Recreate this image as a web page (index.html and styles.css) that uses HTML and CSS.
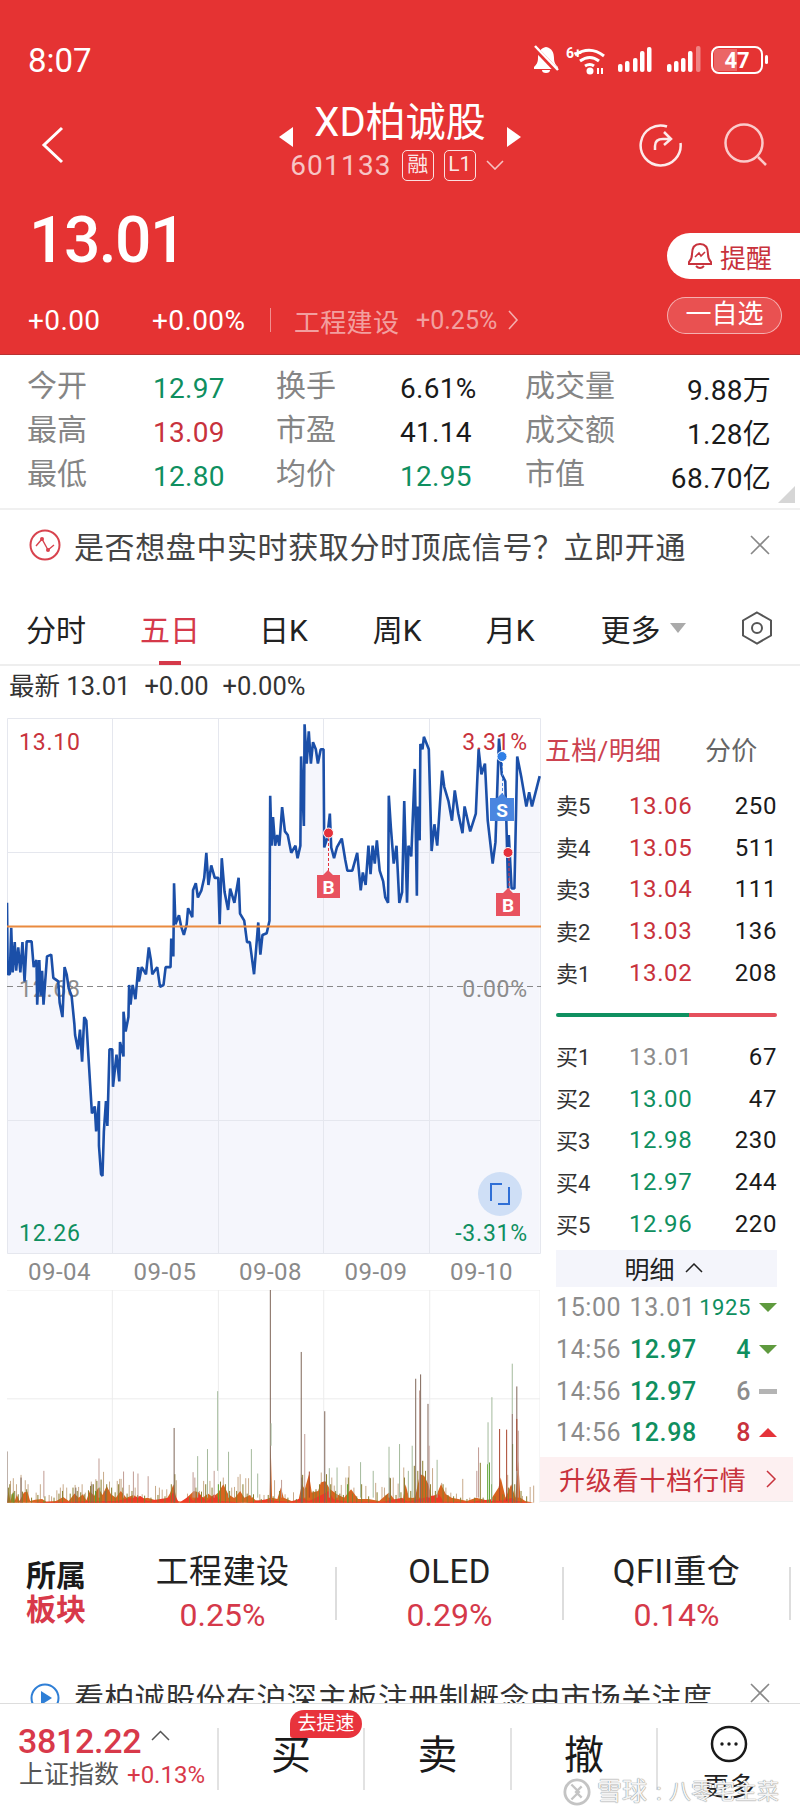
FILE: index.html

```html
<!DOCTYPE html>
<html lang="zh">
<head>
    <meta charset="UTF-8">
    <meta name="viewport" content="width=device-width, initial-scale=1.0">
    <title>XD柏诚股</title>
    <link rel="stylesheet" href="styles.css">
</head>
<body>
<div class="page">

    <header class="top">
        <div class="status">
            <span class="clock">8:07</span>
            <svg class="status-icons" width="240" height="34" viewBox="0 0 240 34">
                <path d="M16 3c6 1 8 6 8 11 0 5 2 7 4 9v2H4v-2c2-2 4-4 4-9 0-6 3-10 8-11z" fill="#fff"/>
                <path d="M12 26h8a4 3 0 0 1-8 0z" fill="#fff"/>
                <path d="M4 3l23 24" stroke="#e53333" stroke-width="5"/>
                <path d="M5 2l23 24" stroke="#fff" stroke-width="2.5"/>
                <text class="st-six" x="36" y="14">6+</text>
                <path d="M45 11q15-10 29 1M50 17q10-7 19 0M55 22q5-3 9 0" stroke="#fff" stroke-width="3" fill="none"/>
                <circle cx="60" cy="27" r="3.5" fill="#fff"/>
                <path d="M67 24h2v6h-2zM71 24h2v6h-2z" fill="#fff"/>
                <g fill="#fff">
                    <rect x="88" y="20" width="4.5" height="8" rx="2"/>
                    <rect x="95" y="17" width="4.5" height="11" rx="2"/>
                    <rect x="103" y="14" width="4.5" height="14" rx="2"/>
                    <rect x="110" y="7" width="4.5" height="21" rx="2"/>
                    <rect x="117" y="3" width="4.5" height="25" rx="2"/>
                    <rect x="137" y="20" width="4.5" height="8" rx="2"/>
                    <rect x="144" y="17" width="4.5" height="11" rx="2"/>
                    <rect x="151" y="14" width="4.5" height="14" rx="2"/>
                    <rect x="158" y="7" width="4.5" height="21" rx="2"/>
                    <rect x="166" y="2" width="4.5" height="26" rx="2" opacity=".4"/>
                </g>
                <rect x="182" y="3" width="50" height="26" rx="7" fill="none" stroke="#fff" stroke-width="2"/>
                <path d="M188 5h19v22h-19a4 4 0 0 1-4-4V9a4 4 0 0 1 4-4z" fill="#fff" opacity=".25"/>
                <rect x="235" y="11" width="3" height="9" rx="1.5" fill="#fff"/>
                <text class="st-batt" x="207" y="24">47</text>
            </svg>
        </div>

        <div class="nav">
            <svg class="nav-back" width="24" height="38" viewBox="0 0 24 38"><path d="M21 2L3 19l18 17" fill="none" stroke="#fff" stroke-width="3"/></svg>
            <div class="nav-center">
                <div class="title-row">
                    <i class="tri-left"></i>
                    <span class="stock-name">XD柏诚股</span>
                    <i class="tri-right"></i>
                </div>
                <div class="code-row">
                    <span class="stock-code">601133</span>
                    <span class="code-tag">融</span>
                    <span class="code-tag">L1</span>
                    <svg width="18" height="10" viewBox="0 0 18 10"><path d="M1 1l8 8 8-8" fill="none" stroke="rgba(255,255,255,.7)" stroke-width="1.6"/></svg>
                </div>
            </div>
            <div class="nav-actions">
                <svg width="44" height="44" viewBox="0 0 44 44">
                    <path d="M28 3.5A20 20 0 1 0 41.5 20" fill="none" stroke="#fdeaea" stroke-width="2.5"/>
                    <path d="M16 27v-4q0-7 8-7h6M25 9l7 7-7 6" fill="none" stroke="#fdeaea" stroke-width="2.5"/>
                </svg>
                <svg width="44" height="44" viewBox="0 0 44 44">
                    <circle cx="20" cy="20" r="18.5" fill="none" stroke="#fbcaca" stroke-width="2.5"/>
                    <path d="M34 34l8 8" stroke="#fbcaca" stroke-width="2.5"/>
                </svg>
            </div>
        </div>

        <div class="quote">
            <div class="quote-left">
                <div class="price">13.01</div>
                <div class="change-row">
                    <span class="chg-num">+0.00</span>
                    <span class="chg-pct">+0.00%</span>
                    <i class="chg-sep"></i>
                    <span class="chg-sector">工程建设</span>
                    <span class="chg-sector-pct">+0.25%</span>
                    <svg width="11" height="20" viewBox="0 0 11 20"><path d="M1 1l8 9-8 9" fill="none" stroke="rgba(255,255,255,.6)" stroke-width="1.6"/></svg>
                </div>
            </div>
            <div class="quote-right">
                <div class="remind-btn">
                    <svg width="26" height="28" viewBox="0 0 26 28">
                        <path d="M13 2c6 0 8 5 8 10 0 4 1 6 3 8v2H2v-2c2-2 3-4 3-8 0-5 2-10 8-10z" fill="none" stroke="#c8323c" stroke-width="2"/>
                        <path d="M9 24q4 4 8 0" fill="none" stroke="#c8323c" stroke-width="2"/>
                        <path d="M8 15l4-4 2 3 4-4" fill="none" stroke="#c8323c" stroke-width="1.6"/>
                    </svg>
                    <span>提醒</span>
                </div>
                <div class="watch-btn">一自选</div>
            </div>
        </div>
    </header>

    <section class="stats">
        <span class="lbl">今开</span><span class="down">12.97</span><span class="lbl">换手</span><span class="val">6.61%</span><span class="lbl">成交量</span><span class="val right">9.88万</span>
        <span class="lbl">最高</span><span class="up">13.09</span><span class="lbl">市盈</span><span class="val">41.14</span><span class="lbl">成交额</span><span class="val right">1.28亿</span>
        <span class="lbl">最低</span><span class="down">12.80</span><span class="lbl">均价</span><span class="down">12.95</span><span class="lbl">市值</span><span class="val right">68.70亿</span>
        <i class="stats-corner"></i>
    </section>

    <section class="signal-banner">
        <svg width="32" height="32" viewBox="0 0 32 32">
            <circle cx="16" cy="16" r="14.5" fill="none" stroke="#d8434e" stroke-width="2"/>
            <path d="M7 17l6-7 6 11 6-5" fill="none" stroke="#d8434e" stroke-width="1.4"/>
            <circle cx="13" cy="10" r="2" fill="#d8434e"/>
            <circle cx="19" cy="21" r="2" fill="#d8434e"/>
        </svg>
        <span class="banner-text">是否想盘中实时获取分时顶底信号？立即开通</span>
        <svg class="banner-close" width="20" height="20" viewBox="0 0 20 20"><path d="M1 1l18 18M19 1L1 19" stroke="#888" stroke-width="1.6"/></svg>
    </section>

    <nav class="tabs">
        <span class="tab tab-1">分时</span>
        <span class="tab tab-2 active">五日</span>
        <span class="tab tab-3">日K</span>
        <span class="tab tab-4">周K</span>
        <span class="tab tab-5">月K</span>
        <span class="tab tab-6">更多<i class="tab-caret"></i></span>
        <svg class="tab-gear" width="32" height="34" viewBox="0 0 32 34">
            <path d="M16 1.5L30 9.5v15L16 32.500 2 24.500v-15z" fill="none" stroke="#555" stroke-width="2"/>
            <circle cx="16" cy="17" r="5" fill="none" stroke="#555" stroke-width="2"/>
        </svg>
    </nav>

    <div class="latest">
        <span>最新 13.01</span><span>+0.00</span><span>+0.00%</span>
    </div>

    <main class="market">
        <div class="charts">
            <svg class="price-chart" width="534" height="536" viewBox="0 0 534 536">
                <g transform="translate(-7 -8) scale(.3509 .3571)">
                    <polygon class="area" points="20,540 22,740 28,740 32,610 36,735 42,650 46,730 52,665 58,735 64,650 70,760 76,648 90,648 96,720 104,700 106,825 112,700 116,800 120,730 124,825 134,690 146,685 152,750 166,760 170,820 178,860 184,720 190,740 196,780 204,800 212,880 214,910 222,950 228,895 234,985 240,860 246,870 252,970 262,1130 270,1110 274,1180 282,1095 282,1220 288,1300 292,1305 296,1180 302,1095 306,1165 312,950 320,950 322,1055 332,965 340,1040 342,930 352,970 352,845 358,900 366,860 368,770 372,825 378,770 386,810 394,720 396,760 404,720 416,740 424,665 430,700 434,740 448,720 456,775 466,770 472,720 486,720 488,640 494,690 496,485 500,600 510,575 516,605 524,630 532,600 536,555 548,580 550,505 558,485 564,525 574,505 582,470 588,400 594,490 602,435 612,470 622,470 626,600 632,415 640,510 650,560 656,500 668,540 680,470 684,570 696,590 704,650 712,650 724,740 736,595 742,685 748,630 760,625 768,590 770,240 774,380 778,300 784,380 790,350 796,380 804,272 812,340 820,350 830,400 842,380 848,415 856,380 858,130 866,325 868,40 874,150 880,60 886,150 892,90 900,110 906,150 914,110 922,110 924,385 932,360 940,290 944,385 952,415 960,385 974,360 984,420 990,450 1004,450 1018,400 1028,505 1034,455 1042,490 1050,380 1056,460 1062,380 1068,430 1074,365 1082,450 1092,480 1098,525 1106,540 1108,240 1114,330 1122,430 1130,380 1138,540 1146,510 1152,255 1160,540 1164,380 1172,410 1182,165 1188,520 1190,270 1196,365 1198,95 1204,110 1208,75 1222,110 1230,395 1238,320 1246,380 1260,170 1266,215 1278,255 1288,310 1296,225 1306,290 1318,345 1324,270 1340,340 1356,290 1364,110 1372,180 1382,150 1390,310 1404,430 1412,370 1422,80 1430,180 1440,200 1448,500 1450,350 1458,500 1466,500 1474,130 1486,190 1500,270 1508,230 1516,270 1538,185 1538,1522 20,1522"/>
                </g>
                <path class="grid" d="M.5 .5H533.500V535.500H.5zM105.500 0V536M211.500 0V536M316.500 0V536M422.500 0V536M0 134.500H534M0 402.500H534"/>
                <text class="ch-label ch-gray" x="12" y="279">12.68</text>
                <text class="ch-label ch-gray end" x="521" y="279">0.00%</text>
                <text class="ch-label ch-red" x="12" y="32">13.10</text>
                <text class="ch-label ch-red end" x="521" y="32">3.31%</text>
                <text class="ch-label ch-green" x="12" y="523">12.26</text>
                <text class="ch-label ch-green end" x="521" y="523">-3.31%</text>
                <path class="ch-dash" d="M0 268.500H534"/>
                <g transform="translate(-7 -8) scale(.3509 .3571)">
                    <polyline class="line" points="20,540 22,740 28,740 32,610 36,735 42,650 46,730 52,665 58,735 64,650 70,760 76,648 90,648 96,720 104,700 106,825 112,700 116,800 120,730 124,825 134,690 146,685 152,750 166,760 170,820 178,860 184,720 190,740 196,780 204,800 212,880 214,910 222,950 228,895 234,985 240,860 246,870 252,970 262,1130 270,1110 274,1180 282,1095 282,1220 288,1300 292,1305 296,1180 302,1095 306,1165 312,950 320,950 322,1055 332,965 340,1040 342,930 352,970 352,845 358,900 366,860 368,770 372,825 378,770 386,810 394,720 396,760 404,720 416,740 424,665 430,700 434,740 448,720 456,775 466,770 472,720 486,720 488,640 494,690 496,485 500,600 510,575 516,605 524,630 532,600 536,555 548,580 550,505 558,485 564,525 574,505 582,470 588,400 594,490 602,435 612,470 622,470 626,600 632,415 640,510 650,560 656,500 668,540 680,470 684,570 696,590 704,650 712,650 724,740 736,595 742,685 748,630 760,625 768,590 770,240 774,380 778,300 784,380 790,350 796,380 804,272 812,340 820,350 830,400 842,380 848,415 856,380 858,130 866,325 868,40 874,150 880,60 886,150 892,90 900,110 906,150 914,110 922,110 924,385 932,360 940,290 944,385 952,415 960,385 974,360 984,420 990,450 1004,450 1018,400 1028,505 1034,455 1042,490 1050,380 1056,460 1062,380 1068,430 1074,365 1082,450 1092,480 1098,525 1106,540 1108,240 1114,330 1122,430 1130,380 1138,540 1146,510 1152,255 1160,540 1164,380 1172,410 1182,165 1188,520 1190,270 1196,365 1198,95 1204,110 1208,75 1222,110 1230,395 1238,320 1246,380 1260,170 1266,215 1278,255 1288,310 1296,225 1306,290 1318,345 1324,270 1340,340 1356,290 1364,110 1372,180 1382,150 1390,310 1404,430 1412,370 1422,80 1430,180 1440,200 1448,500 1450,350 1458,500 1466,500 1474,130 1486,190 1500,270 1508,230 1516,270 1538,185"/>
                </g>
                <path class="avg-line" d="M0 208.500H534"/>
                <!-- buy / sell marks -->
                <path class="mark-stem-red" d="M321.500 115V155M502 135V172"/>
                <path class="mark-stem-blue" d="M495.500 40V80"/>
                <circle cx="321.500" cy="115" r="5" fill="#e5323c" stroke="#fff"/>
                <circle cx="501" cy="134.500" r="5" fill="#e5323c" stroke="#fff"/>
                <circle cx="495" cy="38.500" r="5" fill="#2f7fe6" stroke="#fff"/>
                <path d="M310 157h6l5-5 5 5h7v23h-23z" fill="#e8525f"/>
                <path d="M489 175h7l5-5 5 5h7v23h-24z" fill="#e8525f"/>
                <path d="M483 80h7l5-5 5 5h7v23h-24z" fill="#4a86e0"/>
                <text class="mark-text" x="321.500" y="176">B</text>
                <text class="mark-text" x="501" y="194">B</text>
                <text class="mark-text" x="495" y="99">S</text>
                <!-- expand button -->
                <circle cx="493" cy="476" r="22" fill="#cfdff6"/>
                <path d="M484 483v-17h11M502 469v17h-11" fill="none" stroke="#2f6fd6" stroke-width="2"/>
            </svg>

            <div class="dates">
                <span>09-04</span><span>09-05</span><span>09-08</span><span>09-09</span><span>09-10</span>
            </div>

            <svg class="vol-chart" width="533" height="213" viewBox="20 60 1518 636" preserveAspectRatio="none">
                <path class="vol-grid" d="M20 60H1538M20 385H1538M320 60V695M622 60V695M922 60V695M1224 60V695M1538 60V695"/>
                <path class="vol-tan" d="M30 630V695M38 622V695M47 640V695M60 612V695M72 628V695M80 640V695M103 665V695M115 640V695M140 672V695M147 676V695M162 658V695M172 650V695M180 640V695M190 650V695M214 642V695M224 648V695M234 640V695M243 665V695M260 632V695M273 625V695M295 603V695M312 632V695M334 630V695M341 624V695M345 624V695M368 642V695M385 650V695M405 670V695M443 645V695M454 650V695M462 656V695M475 655V695M502 628V695M534 668V695M568 660V695M580 630V695M598 630V695M636 620V695M660 650V695M668 648V695M678 618V695M684 610V695M700 622V695M708 622V695M740 670V695M752 672V695M782 628V695M812 670V695M836 664V695M915 605V695M945 620V695M952 644V695M972 642V695M985 620V695M994 586V695M1008 650V695M1042 645V695M1070 636V695M1088 648V695M1095 650V695M1120 620V695M1134 638V695M1150 590V695M1232 592V695M1258 636V695M1270 650V695M1284 665V695M1300 668V695M1318 624V695M1338 680V695M1446 612V695M1488 675V695M1510 648V695M1520 644V695"/>
                <polygon class="vol-orange" points="20,695 24,660 30,690 36,665 42,690 48,672 56,690 68,665 78,662 86,690 100,686 120,684 132,692 160,690 180,678 196,690 212,668 224,680 236,670 246,688 256,660 268,675 280,650 292,672 304,645 316,670 330,680 344,660 360,680 380,672 400,685 420,680 444,688 470,692 484,668 494,640 504,690 520,692 552,660 566,664 578,680 592,668 606,678 622,665 636,640 650,670 668,682 684,660 696,680 712,672 728,688 750,690 768,680 771,525 775,680 790,684 800,650 808,680 830,690 850,688 860,640 868,655 880,610 888,665 906,660 914,635 926,630 940,655 960,670 980,680 1000,655 1020,684 1050,684 1080,690 1108,665 1125,688 1148,684 1155,640 1165,680 1182,680 1196,610 1208,615 1220,640 1230,680 1244,670 1256,640 1270,670 1286,680 1305,684 1330,690 1356,680 1380,686 1395,690 1420,650 1426,620 1440,680 1456,640 1468,680 1476,570 1482,680 1496,690 1520,695"/>
                <polygon class="vol-red" points="90,695 130,692 210,692 250,690 330,690 400,675 420,690 480,680 494,665 510,695 540,675 550,690 566,670 590,690 610,670 630,690 700,695 760,685 790,690 830,692 860,680 880,690 920,670 936,660 950,685 990,692 1090,692 1145,680 1160,692 1250,670 1264,692 1340,692 1400,685 1420,690 1460,680 1470,690 1515,695"/>
                <path class="vol-dark" d="M24 650V695M28 640V695M42 660V695M52 670V695M64 662V695M76 655V695M90 680V695M108 672V695M128 676V695M154 680V695M168 668V695M178 660V695M200 668V695M208 650V695M220 660V695M230 664V695M240 670V695M252 658V695M258 645V695M266 640V695M276 630V695M288 626V695M304 640V695M318 650V695M328 664V695M338 640V695M350 650V695M362 668V695M376 660V695M392 672V695M412 674V695M430 680V695M450 672V695M470 676V695M488 640V695M498 610V695M540 678V695M558 650V695M574 662V695M586 640V695M604 650V695M628 632V695M642 640V695M654 660V695M674 660V695M692 640V695M704 668V695M722 670V695M744 684V695M764 672V695M778 676V695M796 660V695M820 680V695M844 684V695M862 612V695M872 650V695M892 660V695M900 655V695M910 640V695M930 610V695M942 640V695M956 660V695M968 668V695M978 672V695M992 620V695M1004 668V695M1016 676V695M1030 640V695M1050 676V695M1074 664V695M1100 672V695M1112 622V695M1128 672V695M1142 664V695M1152 620V695M1170 660V695M1180 585V695M1190 600V695M1204 570V695M1212 600V695M1226 640V695M1240 660V695M1262 640V695M1276 672V695M1292 676V695M1312 680V695M1330 684V695M1352 680V695M1368 576V695M1376 680V695M1410 676V695M1432 670V695M1448 650V695M1466 640V695M1484 660V695M1500 676V695"/>
                <path class="vol-green" d="M34 670V695M38 665V695M1389 580V695M1394 575V695M1400 640V695M1460 520V695M125 690V695M284 650V695M272 660V695M622 640V695M990 640V695"/>
                <path class="vol-brown" d="M20 542V695M496 472V695M770 60V695M858 245V695M1184 325V695M1198 312V695M1219 400V695M1472 348V695M925 422V695M1459 430V695M300 660V695M262 640V695M216 650V695M60 620V695M860 620V695M1110 620V695"/>
                <path class="vol-pink" d="M125 600V680M282 563V680M352 602V680M380 602V680M393 608V680M422 616V680M550 604V680M555 620V680M610 600V680M802 627V680M868 490V680M1195 360V680M1222 525V680M1358 600V680M1363 530V680M1476 480V680"/>
                <path class="vol-sage" d="M563 556V680M591 535V680M620 362V600M651 543V680M716 535V680M734 608V680M772 458V525M938 592V680M960 590V680M1027 574V680M1063 600V680M1108 528V680M1138 520V680M1163 600V680M1174 525V680M1245 567V680M1390 455V580M1401 380V690M1459 280V430"/>
                <path class="vol-rust" d="M881 602V680M1423 475V690M1443 477V690M1472 445V600"/>
            </svg>
        </div>

        <aside class="side">
            <div class="side-tabs"><span class="side-tab-on">五档/明细</span><span class="side-tab-off">分价</span></div>

            <div class="book-row"><span class="book-lbl">卖5</span><span class="up">13.06</span><span class="book-vol">250</span></div>
            <div class="book-row"><span class="book-lbl">卖4</span><span class="up">13.05</span><span class="book-vol">511</span></div>
            <div class="book-row"><span class="book-lbl">卖3</span><span class="up">13.04</span><span class="book-vol">111</span></div>
            <div class="book-row"><span class="book-lbl">卖2</span><span class="up">13.03</span><span class="book-vol">136</span></div>
            <div class="book-row"><span class="book-lbl">卖1</span><span class="up">13.02</span><span class="book-vol">208</span></div>

            <div class="book-bar"><i class="book-bar-buy"></i><i class="book-bar-sell"></i></div>

            <div class="book-row"><span class="book-lbl">买1</span><span class="flat">13.01</span><span class="book-vol">67</span></div>
            <div class="book-row"><span class="book-lbl">买2</span><span class="down">13.00</span><span class="book-vol">47</span></div>
            <div class="book-row"><span class="book-lbl">买3</span><span class="down">12.98</span><span class="book-vol">230</span></div>
            <div class="book-row"><span class="book-lbl">买4</span><span class="down">12.97</span><span class="book-vol">244</span></div>
            <div class="book-row"><span class="book-lbl">买5</span><span class="down">12.96</span><span class="book-vol">220</span></div>

            <div class="detail-head">
                <span>明细</span>
                <svg width="18" height="10" viewBox="0 0 18 10"><path d="M1 9l8-8 8 8" fill="none" stroke="#222" stroke-width="1.5"/></svg>
            </div>

            <div class="tick"><span class="tick-time">15:00</span><span class="tick-price flat">13.01</span><span class="tick-vol small down">1925</span><i class="arrow-down"></i></div>
            <div class="tick"><span class="tick-time">14:56</span><span class="tick-price down">12.97</span><span class="tick-vol down">4</span><i class="arrow-down"></i></div>
            <div class="tick"><span class="tick-time">14:56</span><span class="tick-price down">12.97</span><span class="tick-vol flat">6</span><i class="arrow-flat"></i></div>
            <div class="tick"><span class="tick-time">14:56</span><span class="tick-price down">12.98</span><span class="tick-vol up">8</span><i class="arrow-up"></i></div>

            <div class="upgrade">
                <span>升级看十档行情</span>
                <svg width="11" height="18" viewBox="0 0 11 18"><path d="M1 1l8 8-8 8" fill="none" stroke="#c8323c" stroke-width="1.5"/></svg>
            </div>
        </aside>
    </main>

    <section class="sectors">
        <div class="sector-head"><span>所属</span><span class="sector-head-red">板块</span></div>
        <div class="sector-item"><span class="sector-name">工程建设</span><span class="sector-pct">0.25%</span></div>
        <i class="sector-sep"></i>
        <div class="sector-item"><span class="sector-name">OLED</span><span class="sector-pct">0.29%</span></div>
        <i class="sector-sep"></i>
        <div class="sector-item"><span class="sector-name">QFII重仓</span><span class="sector-pct">0.14%</span></div>
        <i class="sector-sep"></i>
    </section>

    <section class="attention">
        <svg width="30" height="30" viewBox="0 0 30 30">
            <circle cx="15" cy="15" r="13.500" fill="none" stroke="#2f7fd6" stroke-width="2"/>
            <path d="M11 8l11 7-11 7z" fill="#2f7fd6"/>
        </svg>
        <span class="attention-text">看柏诚股份在沪深主板注册制概念中市场关注度</span>
        <svg class="attention-close" width="20" height="20" viewBox="0 0 20 20"><path d="M1 1l18 18M19 1L1 19" stroke="#888" stroke-width="1.6"/></svg>
    </section>

    <footer class="bottom">
        <div class="index-box">
            <div class="index-top">
                <span class="index-num">3812.22</span>
                <svg width="19" height="11" viewBox="0 0 19 11"><path d="M1 10l8.500-8.500L18 10" fill="none" stroke="#555" stroke-width="1.5"/></svg>
            </div>
            <div class="index-bottom"><span class="index-name">上证指数</span><span class="index-pct">+0.13%</span></div>
        </div>
        <div class="trade-btn"><span class="speed-tag">去提速</span>买</div>
        <div class="trade-btn">卖</div>
        <div class="trade-btn">撤</div>
        <div class="more-btn">
            <svg width="38" height="38" viewBox="0 0 38 38">
                <circle cx="19" cy="19" r="17" fill="none" stroke="#1a1a1a" stroke-width="2.500"/>
                <circle cx="12" cy="19" r="1.700" fill="#1a1a1a"/><circle cx="19" cy="19" r="1.700" fill="#1a1a1a"/><circle cx="26" cy="19" r="1.700" fill="#1a1a1a"/>
            </svg>
            <span>更多</span>
        </div>
        <div class="watermark">
            <svg width="28" height="28" viewBox="0 0 30 30">
                <circle cx="15" cy="15" r="13" fill="none" stroke="#c4c4c4" stroke-width="3"/>
                <path d="M9 7l8 8-8 8M20 9l-6 6 6 6" fill="none" stroke="#c4c4c4" stroke-width="2.500"/>
            </svg>
            <span class="wm-site">雪球</span><span class="wm-colon">:</span><span class="wm-user">八零宅主菜</span>
        </div>
    </footer>
</div>
</body>
</html>
```

FILE: styles.css

```css
:root {
    --red: #e53333;
    --txt-up: #c8323c;
    --txt-down: #0f8f5f;
    --txt-flat: #8c8c8c;
    --txt-label: #858585;
    --grid: #e5e7ee;
}
* { box-sizing: border-box; }
body {
    margin: 0;
    background: #fff;
    font-family: Roboto, "Noto Sans CJK SC", sans-serif;
    color: #1a1a1a;
}
i { display: block; font-style: normal; }
svg { display: block; flex: none; }
.page {
    width: 800px;
    height: 1814px;
    overflow: hidden;
    position: relative;
}
.up { color: var(--txt-up); }
.down { color: var(--txt-down); }
.flat { color: var(--txt-flat); }

/* red header */
.top {
    height: 355px;
    background: var(--red);
    border-bottom: 1px solid #b83232;
    color: #fff;
    padding-top: 43px;
}
.status {
    height: 36px;
    display: flex;
    align-items: center;
    justify-content: space-between;
    padding: 0 30px 0 28px;
}
.clock {
    font-size: 33px;
    line-height: 36px;
}
.st-six { font-size: 14px; font-weight: 700; fill: #fff; }
.st-batt { font-size: 22px; font-weight: 700; fill: #fff; text-anchor: middle; }
.nav {
    height: 92px;
    margin-top: 16px;
    display: grid;
    grid-template-columns: 1fr auto 1fr;
    align-items: center;
    padding: 0 32px 0 41px;
}
.nav-back { margin-top: 8px; }
.nav-center {
    display: flex;
    flex-direction: column;
    align-items: center;
    margin-left: -9px;
}
.title-row {
    display: flex;
    align-items: flex-end;
    gap: 21px;
    height: 48px;
}
.stock-name {
    font-size: 40px;
    line-height: 48px;
}
.tri-left, .tri-right {
    width: 0;
    height: 0;
    border-top: 10px solid transparent;
    border-bottom: 10px solid transparent;
}
.tri-left { border-right: 14px solid #fff; }
.tri-right { border-left: 14px solid #fff; }
.code-row {
    display: flex;
    align-items: center;
    gap: 10px;
    height: 36px;
    margin-left: -6px;
}
.stock-code {
    font-size: 28px;
    letter-spacing: 1.2px;
    color: rgba(255, 255, 255, 0.72);
}
.code-tag {
    width: 32px;
    height: 31px;
    border: 1.5px solid rgba(255, 255, 255, 0.85);
    border-radius: 5px;
    font-size: 21px;
    line-height: 27px;
    text-align: center;
    color: rgba(255, 255, 255, 0.9);
}
.nav-actions {
    display: flex;
    justify-content: flex-end;
    gap: 41px;
    margin-top: 8px;
}
.quote {
    display: flex;
    justify-content: space-between;
    height: 166px;
}
.quote-left { padding: 18px 0 0 28px; }
.price {
    font-size: 64px;
    line-height: 72px;
    font-weight: 500;
    padding-left: 1px;
    letter-spacing: -1.5px;
}
.change-row {
    display: flex;
    align-items: center;
    height: 34px;
    margin-top: 26px;
}
.chg-num { font-size: 28px; width: 124px; letter-spacing: .4px; }
.chg-pct { font-size: 28px; width: 118px; letter-spacing: .4px; }
.chg-sep { width: 1px; height: 24px; background: rgba(255, 255, 255, 0.45); margin-right: 23px; }
.chg-sector { font-size: 26px; color: rgba(255, 255, 255, 0.55); width: 122px; letter-spacing: .3px; }
.chg-sector-pct { font-size: 25px; color: rgba(255, 255, 255, 0.55); width: 92px; }
.quote-right {
    width: 133px;
    padding-top: 46px;
}
.remind-btn {
    height: 46px;
    background: #fff;
    border-radius: 23px 0 0 23px;
    display: flex;
    align-items: center;
    gap: 7px;
    padding-left: 20px;
    color: var(--txt-up);
    font-size: 26px;
}
.watch-btn {
    width: 115px;
    height: 37px;
    margin-top: 18px;
    border: 1px solid rgba(255, 255, 255, 0.55);
    border-radius: 19px;
    background: rgba(255, 255, 255, 0.15);
    font-size: 26px;
    line-height: 33px;
    text-align: center;
}

/* quote stats */
.stats {
    height: 155px;
    padding: 11px 29px 0 27px;
    display: grid;
    grid-template-columns: 126px 123px 124px 125px 110px 1fr;
    grid-auto-rows: 44px;
    align-items: center;
    font-size: 28px;
    letter-spacing: .3px;
    border-bottom: 2px solid #f0f0f0;
    position: relative;
    white-space: nowrap;
}
.lbl { color: var(--txt-label); font-size: 30px; line-height: 40px; letter-spacing: 0; padding-bottom: 4px; }
.val { color: #1a1a1a; }
.right { text-align: right; }
.stats-corner {
    position: absolute;
    right: 5px;
    bottom: 5px;
    width: 17px;
    height: 17px;
    background: #d6d6d6;
    clip-path: polygon(100% 0, 100% 100%, 0 100%);
}

/* signal banner */
.signal-banner {
    height: 90px;
    display: flex;
    align-items: center;
    padding: 0 30px 20px 29px;
}
.banner-text {
    font-size: 30px;
    color: #444;
    margin-left: 13px;
    white-space: nowrap;
    letter-spacing: .6px;
}
.banner-close { margin-left: auto; }

/* period tabs */
.tabs {
    height: 66px;
    display: flex;
    align-items: center;
    border-bottom: 2px solid #eee;
    position: relative;
    padding: 0 27px 9px 26px;
}
.tab {
    font-size: 30px;
    color: #222;
    white-space: nowrap;
}
.tab-2 { margin-left: 54px; }
.tab-3 { margin-left: 59px; }
.tab-4 { margin-left: 65px; }
.tab-5 { margin-left: 64px; }
.tab-6 { margin-left: 66px; display: flex; align-items: center; gap: 10px; }
.active { color: #d5394a; }
.active::after {
    content: "";
    position: absolute;
    left: 159px;
    bottom: -1px;
    width: 22px;
    height: 4px;
    background: #d5394a;
}
.tab-caret {
    width: 0;
    height: 0;
    border-left: 8px solid transparent;
    border-right: 8px solid transparent;
    border-top: 10px solid #aaa;
}
.tab-gear { margin-left: auto; }

.latest {
    height: 52px;
    padding: 4px 0 0 9px;
    display: flex;
    gap: 14px;
    font-size: 25.500px;
    line-height: 32px;
    color: #333;
}

/* chart + order book */
.market {
    display: flex;
    height: 785px;
}
.charts {
    width: 540px;
    padding-left: 7px;
}
.area { fill: #f5f6fc; }
.grid { fill: none; stroke: var(--grid); stroke-width: 1; }
.line {
    fill: none;
    stroke: #1b4fa8;
    stroke-width: 2.6;
    vector-effect: non-scaling-stroke;
    stroke-linejoin: bevel;
}
.avg-line { stroke: #ea8a3f; stroke-width: 2; }
.ch-dash { stroke: #888; stroke-width: 1; stroke-dasharray: 6 4; }
.ch-label { font-size: 23px; letter-spacing: .8px; }
.ch-red { fill: var(--txt-up); }
.ch-green { fill: var(--txt-down); }
.ch-gray { fill: #8c8c8c; }
.end { text-anchor: end; }
.mark-stem-red { stroke: #e5323c; stroke-width: 1; stroke-dasharray: 3 2; }
.mark-stem-blue { stroke: #4a86e0; stroke-width: 1; stroke-dasharray: 3 2; }
.mark-text { font-size: 19px; font-weight: 700; fill: #fff; text-anchor: middle; }
.dates {
    height: 36px;
    display: flex;
    font-size: 24px;
    line-height: 36px;
    color: #8a8a8a;
    letter-spacing: .5px;
    padding-left: 21px;
}
.dates span { width: 105.500px; flex: none; }
.vol-chart path { fill: none; vector-effect: non-scaling-stroke; stroke-width: 1; }
.vol-grid { stroke: #ececec; }
.vol-tan { stroke: #c8aa8a; }
.vol-orange { fill: #d8641f; }
.vol-red { fill: #ee3a26; }
.vol-dark { stroke: #8a7c2c; }
.vol-green { stroke: #5aa030; }
.vol-brown { stroke: #7f6658; }
.vol-pink { stroke: #c09c94; }
.vol-sage { stroke: #a4ba9c; }
.vol-rust { stroke: #a8442c; }

.side {
    width: 260px;
    padding-left: 16px;
    padding-right: 23px;
}
.side-tabs {
    height: 67px;
    display: flex;
    align-items: flex-start;
    padding-top: 15px;
    font-size: 26px;
    line-height: 36px;
    letter-spacing: .3px;
    margin-left: -11px;
}
.side-tab-on { color: #cc4350; width: 160px; }
.side-tab-off { color: #666; }
.book-row {
    height: 41.800px;
    display: grid;
    grid-template-columns: 73px 1fr auto;
    align-items: center;
    font-size: 24px;
    letter-spacing: .6px;
}
.book-lbl { font-size: 22px; color: #333; letter-spacing: 0; padding-bottom: 3px; }
.book-vol { color: #1a1a1a; }
.book-bar {
    display: flex;
    height: 4px;
    margin: 19px 0 19px;
    border-radius: 2px;
    overflow: hidden;
}
.book-bar-buy { width: 133px; background: #0f9060; }
.book-bar-sell { flex: 1; background: #e5505c; }
.detail-head {
    height: 37px;
    margin-top: 5px;
    background: #f4f5fb;
    display: flex;
    align-items: center;
    justify-content: center;
    gap: 10px;
    font-size: 25px;
    color: #222;
    padding-right: 6px;
}
.tick {
    height: 41.700px;
    display: flex;
    align-items: center;
    font-size: 25px;
    letter-spacing: .6px;
    white-space: nowrap;
}
.tick-time { width: 74px; color: #8c8c8c; }
.tick-price { width: 70px; font-weight: 500; }
.tick-price.flat { font-weight: 400; }
.tick-vol { flex: 1; text-align: right; font-weight: 500; }
.tick-vol.small { font-size: 22px; font-weight: 400; }
.arrow-down, .arrow-up, .arrow-flat { width: 18px; margin-left: 8px; }
.arrow-down { height: 0; border-left: 9px solid transparent; border-right: 9px solid transparent; border-top: 9px solid #5f9a3e; }
.arrow-up { height: 0; border-left: 9px solid transparent; border-right: 9px solid transparent; border-bottom: 9px solid #e5333a; }
.arrow-flat { height: 5px; background: #b4b4b4; }
.upgrade {
    height: 45px;
    margin: 3px -16px 0 -16px;
    background: #fdf0f1;
    display: flex;
    align-items: center;
    justify-content: space-between;
    padding: 0 16px 0 19px;
    font-size: 26px;
    letter-spacing: .8px;
    color: var(--txt-up);
    border-bottom: 1px solid #eee;
}

/* related sectors */
.sectors {
    height: 180px;
    display: flex;
    align-items: center;
    padding-left: 26px;
}
.sector-head {
    width: 84px;
    display: flex;
    flex-direction: column;
    font-size: 30px;
    line-height: 34px;
    font-weight: 700;
}
.sector-head-red { color: #d8394a; }
.sector-item {
    flex: 1;
    display: flex;
    flex-direction: column;
    align-items: center;
}
.sector-name { font-size: 33px; line-height: 44px; color: #222; letter-spacing: .4px; }
.sector-pct { font-size: 32px; line-height: 42px; color: #d5394a; }
.sector-sep { width: 2px; height: 53px; background: #ddd; }
.sectors .sector-sep:last-child { margin-right: 9px; }

.attention {
    height: 20px;
    overflow: hidden;
    display: flex;
    align-items: flex-start;
    padding: 0 30px;
}
.attention-text {
    font-size: 30px;
    line-height: 38px;
    margin: -3px 0 0 14px;
    color: #333;
    white-space: nowrap;
    letter-spacing: .4px;
}
.attention-close { margin-left: auto; }

/* bottom trade bar */
.bottom {
    height: 111px;
    background: #fff;
    border-top: 1px solid #ddd;
    display: grid;
    grid-template-columns: 217px 146px 147px 146px 1fr;
    align-items: start;
    padding-top: 24px;
    position: relative;
}
.index-box { padding: 0 0 0 18px; height: 62px; }
.index-top { display: flex; align-items: flex-start; gap: 10px; height: 28px; margin-top: -2px; }
.index-top svg { margin-top: 4px; }
.index-num { font-size: 34px; line-height: 30px; font-weight: 500; color: #d8394a; letter-spacing: -.3px; }
.index-bottom { display: flex; align-items: center; gap: 8px; margin-top: 6px; white-space: nowrap; padding-left: 1px; }
.index-name { font-size: 25px; line-height: 30px; color: #555; }
.index-pct { font-size: 24px; color: #d8394a; }
.trade-btn {
    height: 62px;
    border-left: 2px solid #e2e2e2;
    display: flex;
    align-items: center;
    justify-content: center;
    font-size: 40px;
    line-height: 56px;
    padding-bottom: 6px;
    color: #1a1a1a;
    position: relative;
}
.speed-tag {
    position: absolute;
    left: 71px;
    top: -18px;
    width: 72px;
    height: 28px;
    background: #e8333c;
    color: #fff;
    border-radius: 14px 14px 14px 3px;
    font-size: 19px;
    line-height: 28px;
    text-align: center;
}
.more-btn {
    height: 62px;
    border-left: 2px solid #e2e2e2;
    display: flex;
    flex-direction: column;
    align-items: center;
    font-size: 26px;
    line-height: 30px;
    color: #222;
}
.more-btn svg { margin-top: -3px; }
.more-btn span { margin-top: 9px; }
.watermark {
    position: absolute;
    left: 563px;
    top: 72px;
    display: flex;
    align-items: center;
    line-height: 32px;
    color: #f4f4f4;
    text-shadow: 0 0 1px #888, 0 0 1px #888;
    white-space: nowrap;
}
.wm-site { font-size: 25px; margin-left: 6px; width: 52px; }
.wm-colon { font-size: 24px; width: 20px; text-align: center; }
.wm-user { font-size: 22px; }
```
